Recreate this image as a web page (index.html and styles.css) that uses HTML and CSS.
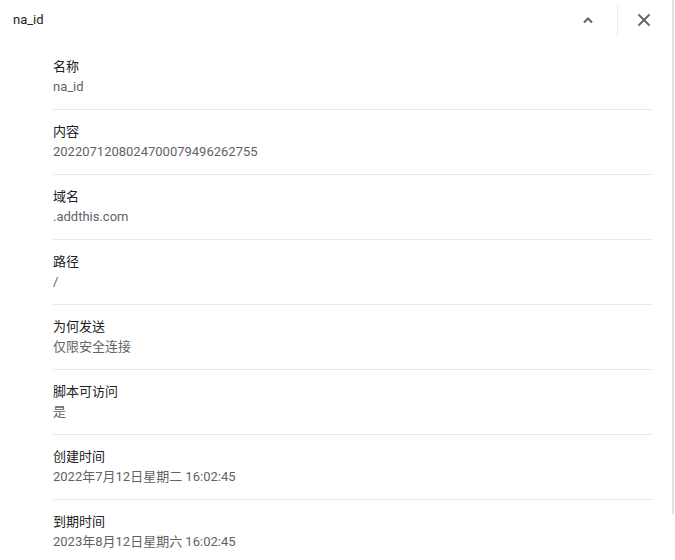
FILE: index.html
```html
<!DOCTYPE html>
<html lang="zh-CN">
<head>
  <meta charset="UTF-8">
  <title>na_id</title>
  <link rel="stylesheet" href="styles.css">
</head>
<body>
  <div class="panel">
    <div class="header">
      <div class="title">na_id</div>
      <button class="icon-btn" title="收起">
        <svg width="20" height="20" viewBox="0 0 20 20"><path d="M6 12.5 L10 8.5 L14 12.5" fill="none" stroke="#5f6368" stroke-width="2"/></svg>
      </button>
      <div class="sep"></div>
      <button class="icon-btn" title="关闭">
        <svg width="20" height="20" viewBox="0 0 20 20"><path d="M4.5 4.5 L15.5 15.5 M15.5 4.5 L4.5 15.5" fill="none" stroke="#5f6368" stroke-width="1.8"/></svg>
      </button>
    </div>
    <div class="rows">
      <div class="row"><div class="label">名称</div><div class="value">na_id</div></div>
      <div class="row"><div class="label">内容</div><div class="value">2022071208024700079496262755</div></div>
      <div class="row"><div class="label">域名</div><div class="value">.addthis.com</div></div>
      <div class="row"><div class="label">路径</div><div class="value">/</div></div>
      <div class="row"><div class="label">为何发送</div><div class="value">仅限安全连接</div></div>
      <div class="row"><div class="label">脚本可访问</div><div class="value">是</div></div>
      <div class="row"><div class="label">创建时间</div><div class="value">2022年7月12日星期二 16:02:45</div></div>
      <div class="row"><div class="label">到期时间</div><div class="value">2023年8月12日星期六 16:02:45</div></div>
    </div>
  </div>
</body>
</html>
```
FILE: styles.css
```css
body {
  margin: 0;
  font-family: Roboto, "Noto Sans CJK SC", sans-serif;
  font-size: 13px;
  color: #202124;
  background: #fff;
}
.panel {
  position: relative;
  width: 672px;
}
.panel::after {
  content: "";
  position: absolute;
  top: 0;
  right: -2px;
  width: 2px;
  height: 514px;
  background: #e2e2e2;
}
.header {
  display: flex;
  align-items: center;
  height: 42px;
  padding: 0 12px 0 13px;
}
.title {
  flex: 1;
  margin-top: -3px;
}
.icon-btn {
  width: 32px;
  height: 32px;
  border: none;
  background: none;
  padding: 0;
  display: flex;
  align-items: center;
  justify-content: center;
  margin-top: -2px;
}
.icon-btn:first-of-type {
  margin-right: 13px;
}
.sep {
  width: 1px;
  height: 32px;
  background: #ececec;
  margin-right: 10px;
}
.rows {
  padding: 0 20px 0 53px;
}
.row {
  padding: 12px 0;
  border-bottom: 1px solid #e8e8e8;
}
.row:first-child {
  padding-top: 15px;
}
.row:last-child {
  border-bottom: none;
}
.label {
  line-height: 20px;
}
.value {
  line-height: 20px;
  color: #5f6368;
}
```
